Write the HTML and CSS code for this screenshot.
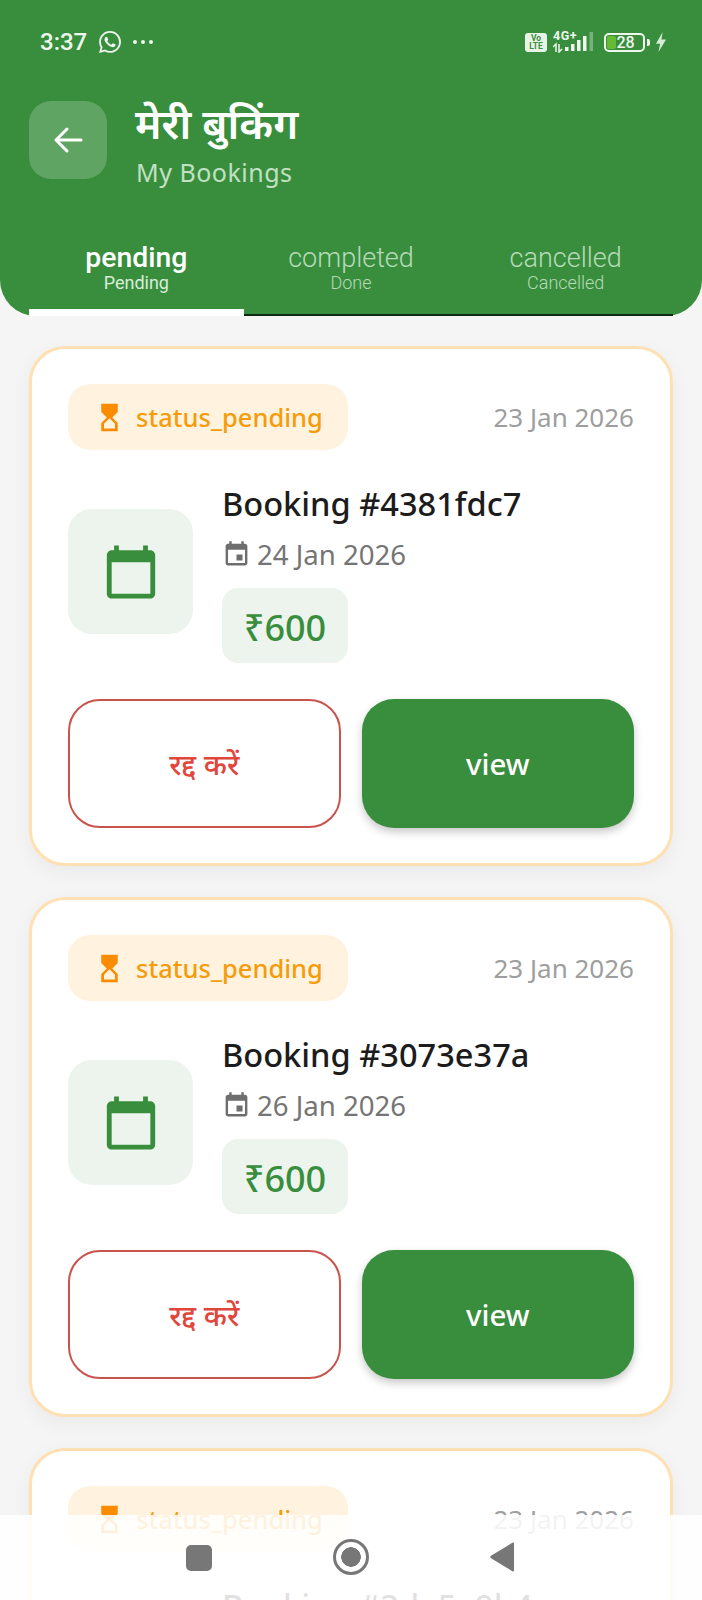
FILE: index.html
```html
<!DOCTYPE html>
<html lang="hi">
<head>
<meta charset="utf-8">
<title>मेरी बुकिंग</title>
<link rel="stylesheet" href="styles.css">
</head>
<body>
<div class="screen">
  <header class="top">
    <div class="statusbar">
      <div class="status-left">
        <span class="clock">3:37</span>
        <svg class="wa" viewBox="0 0 24 24"><path d="M17.472 14.382c-.297-.149-1.758-.867-2.03-.967-.273-.099-.471-.148-.67.15-.197.297-.767.966-.94 1.164-.173.199-.347.223-.644.075-.297-.15-1.255-.463-2.39-1.475-.883-.788-1.48-1.761-1.653-2.059-.173-.297-.018-.458.13-.606.134-.133.298-.347.446-.52.149-.174.198-.298.298-.497.099-.198.05-.371-.025-.52-.075-.149-.669-1.612-.916-2.207-.242-.579-.487-.5-.669-.51-.173-.008-.371-.01-.57-.01-.198 0-.52.074-.792.372-.272.297-1.04 1.016-1.04 2.479 0 1.462 1.065 2.875 1.213 3.074.149.198 2.096 3.2 5.077 4.487.709.306 1.262.489 1.694.625.712.227 1.36.195 1.871.118.571-.085 1.758-.719 2.006-1.413.248-.694.248-1.289.173-1.413-.074-.124-.272-.198-.57-.347m-5.421 7.403h-.004a9.87 9.87 0 01-5.031-1.378l-.361-.214-3.741.982.998-3.648-.235-.374a9.86 9.86 0 01-1.51-5.26c.001-5.45 4.436-9.884 9.888-9.884 2.64 0 5.122 1.03 6.988 2.898a9.825 9.825 0 012.893 6.994c-.003 5.45-4.437 9.884-9.885 9.884m8.413-18.297A11.815 11.815 0 0012.05 0C5.495 0 .16 5.335.157 11.892c0 2.096.547 4.142 1.588 5.945L.057 24l6.305-1.654a11.882 11.882 0 005.683 1.448h.005c6.554 0 11.89-5.335 11.893-11.893a11.821 11.821 0 00-3.48-8.413z"/></svg>
        <svg class="dots" viewBox="0 0 22 6"><circle cx="3" cy="3" r="2"/><circle cx="11" cy="3" r="2"/><circle cx="19" cy="3" r="2"/></svg>
      </div>
      <div class="status-right">
        <span class="volte">Vo<br>LTE</span>
        <span class="network">
          <span class="net-type">4G+</span>
          <svg class="signal" viewBox="0 0 42 22">
            <path class="sig-arrows" d="M0 16l3-3v8M6 13v8l3-3"/>
            <rect x="12" y="16" width="3.500" height="4"/>
            <rect x="18" y="13" width="3.500" height="7"/>
            <rect x="24" y="9" width="3.500" height="11"/>
            <rect x="30" y="5" width="3.500" height="15"/>
            <rect class="sig-off" x="36.500" y="1" width="3.500" height="19"/>
          </svg>
        </span>
        <span class="battery"><span class="battery-fill"></span><span class="battery-num">28</span></span>
        <span class="battery-tip"></span>
        <svg class="bolt" viewBox="0 0 14 24"><path d="M9 0L1 14h5l-2 10 9-15H7.500z"/></svg>
      </div>
    </div>
    <div class="titlebar">
      <button class="back" type="button">
        <svg viewBox="0 0 32 32"><path d="M29 16H4M15 5L4 16l11 11"/></svg>
      </button>
      <div class="titles">
        <h1>मेरी बुकिंग</h1>
        <p>My Bookings</p>
      </div>
    </div>
    <nav class="tabs">
      <div class="tab active"><span class="tab-main">pending</span><span class="tab-sub">Pending</span></div>
      <div class="tab"><span class="tab-main">completed</span><span class="tab-sub">Done</span></div>
      <div class="tab"><span class="tab-main">cancelled</span><span class="tab-sub">Cancelled</span></div>
    </nav>
  </header>

  <main class="list">
    <article class="card">
      <div class="card-head">
        <span class="pill">
          <svg viewBox="0 0 24 24"><path d="M6 2v6h.01L6 8.010 10 12l-4 4 .01.01H6V22h12v-5.990h-.01L18 16l-4-4 4-3.990-.01-.01H18V2H6zm10 14.500V20H8v-3.500l4-4 4 4z"/></svg>
          status_pending
        </span>
        <span class="created">23 Jan 2026</span>
      </div>
      <div class="card-body">
        <div class="icon-box"><svg viewBox="0 0 24 24"><path d="M20 3h-1V1h-2v2H7V1H5v2H4c-1.100 0-2 .9-2 2v16c0 1.100.9 2 2 2h16c1.100 0 2-.9 2-2V5c0-1.100-.9-2-2-2zm0 18H4V8h16v13z"/></svg></div>
        <div class="info">
          <h2>Booking #4381fdc7</h2>
          <div class="when"><svg viewBox="0 0 24 24"><path d="M17 12h-5v5h5v-5zM16 1v2H8V1H6v2H5c-1.110 0-1.990.9-1.990 2L3 19c0 1.100.89 2 2 2h14c1.100 0 2-.9 2-2V5c0-1.100-.9-2-2-2h-1V1h-2zm3 18H5V8h14v11z"/></svg>24 Jan 2026</div>
          <span class="price">₹600</span>
        </div>
      </div>
      <div class="actions">
        <button class="btn cancel" type="button">रद्द करें</button>
        <button class="btn view" type="button">view</button>
      </div>
    </article>

    <article class="card">
      <div class="card-head">
        <span class="pill">
          <svg viewBox="0 0 24 24"><path d="M6 2v6h.01L6 8.010 10 12l-4 4 .01.01H6V22h12v-5.990h-.01L18 16l-4-4 4-3.990-.01-.01H18V2H6zm10 14.500V20H8v-3.500l4-4 4 4z"/></svg>
          status_pending
        </span>
        <span class="created">23 Jan 2026</span>
      </div>
      <div class="card-body">
        <div class="icon-box"><svg viewBox="0 0 24 24"><path d="M20 3h-1V1h-2v2H7V1H5v2H4c-1.100 0-2 .9-2 2v16c0 1.100.9 2 2 2h16c1.100 0 2-.9 2-2V5c0-1.100-.9-2-2-2zm0 18H4V8h16v13z"/></svg></div>
        <div class="info">
          <h2>Booking #3073e37a</h2>
          <div class="when"><svg viewBox="0 0 24 24"><path d="M17 12h-5v5h5v-5zM16 1v2H8V1H6v2H5c-1.110 0-1.990.9-1.990 2L3 19c0 1.100.89 2 2 2h14c1.100 0 2-.9 2-2V5c0-1.100-.9-2-2-2h-1V1h-2zm3 18H5V8h14v11z"/></svg>26 Jan 2026</div>
          <span class="price">₹600</span>
        </div>
      </div>
      <div class="actions">
        <button class="btn cancel" type="button">रद्द करें</button>
        <button class="btn view" type="button">view</button>
      </div>
    </article>

    <article class="card">
      <div class="card-head">
        <span class="pill">
          <svg viewBox="0 0 24 24"><path d="M6 2v6h.01L6 8.010 10 12l-4 4 .01.01H6V22h12v-5.990h-.01L18 16l-4-4 4-3.990-.01-.01H18V2H6zm10 14.500V20H8v-3.500l4-4 4 4z"/></svg>
          status_pending
        </span>
        <span class="created">23 Jan 2026</span>
      </div>
      <div class="card-body">
        <div class="icon-box"><svg viewBox="0 0 24 24"><path d="M20 3h-1V1h-2v2H7V1H5v2H4c-1.100 0-2 .9-2 2v16c0 1.100.9 2 2 2h16c1.100 0 2-.9 2-2V5c0-1.100-.9-2-2-2zm0 18H4V8h16v13z"/></svg></div>
        <div class="info">
          <h2>Booking #3da5e9b4</h2>
        </div>
      </div>
    </article>
  </main>

  <div class="navbar">
    <span class="nav-square"></span>
    <span class="nav-home"></span>
    <svg class="nav-back" viewBox="0 0 25 30"><path d="M24 1.500V28.500a1 1 0 0 1-1.700.7L1 16.200a1.500 1.500 0 0 1 0-2.400L22.300.8A1 1 0 0 1 24 1.500z"/></svg>
  </div>
</div>
</body>
</html>
```
FILE: styles.css
```css
* { box-sizing: border-box; }

html, body {
  margin: 0;
  padding: 0;
}

body {
  background: #f5f5f5;
  font-family: "Noto Sans", "Noto Sans Devanagari", "DejaVu Sans", sans-serif;
}

.screen {
  position: relative;
  width: 702px;
  height: 1600px;
  overflow: hidden;
  background: #f5f5f5;
}

/* Green header with status bar, title and tabs */
.top {
  height: 316px;
  padding: 22px 29px 0;
  background: #388e3c;
  border-radius: 0 0 36px 36px;
  display: flex;
  flex-direction: column;
}

.statusbar {
  height: 40px;
  padding: 0 6px 0 11px;
  display: flex;
  align-items: center;
  justify-content: space-between;
  color: #eef6ee;
  font-family: Roboto, sans-serif;
}

.status-left,
.status-right {
  display: flex;
  align-items: center;
}

.clock {
  font-size: 24px;
  font-weight: 500;
}

.wa {
  width: 22px;
  height: 22px;
  margin-left: 12px;
  fill: #eef6ee;
}

.dots {
  width: 22px;
  height: 6px;
  margin-left: 11px;
  fill: #eef6ee;
}

.volte {
  width: 22px;
  height: 19px;
  background: #e8f3e8;
  border-radius: 3px;
  color: #388e3c;
  font-size: 8.500px;
  line-height: 8.500px;
  font-weight: 700;
  text-align: center;
  padding-top: 1px;
}

.network {
  position: relative;
  width: 42px;
  height: 22px;
  margin-left: 6px;
}

.net-type {
  position: absolute;
  left: 0;
  top: -2px;
  font-size: 12.500px;
  line-height: 13px;
  font-weight: 700;
  letter-spacing: 0.5px;
}

.signal {
  display: block;
  width: 42px;
  height: 22px;
  fill: #eef6ee;
}

.sig-arrows {
  fill: none;
  stroke: #eef6ee;
  stroke-width: 1.500;
}

.sig-off {
  opacity: 0.35;
}

.battery {
  position: relative;
  width: 41px;
  height: 19px;
  margin-left: 9px;
  border: 2px solid #eef6ee;
  border-radius: 5px;
  display: flex;
  align-items: center;
  justify-content: center;
}

.battery-fill {
  position: absolute;
  left: 1px;
  top: 1px;
  bottom: 1px;
  width: 9px;
  background: #66bb33;
  border-radius: 2px;
}

.battery-num {
  position: relative;
  font-size: 16px;
  font-weight: 500;
  padding-left: 2px;
}

.battery-tip {
  width: 3px;
  height: 7px;
  margin-left: 2px;
  background: #eef6ee;
  border-radius: 0 2px 2px 0;
}

.bolt {
  width: 12px;
  height: 20px;
  margin-left: 5px;
  fill: #d8ebd8;
}

.titlebar {
  margin-top: 39px;
  display: flex;
  align-items: flex-start;
  gap: 28px;
}

.back {
  width: 78px;
  height: 78px;
  padding: 0;
  border: 0;
  border-radius: 22px;
  background: rgba(255, 255, 255, 0.2);
  display: flex;
  align-items: center;
  justify-content: center;
}

.back svg {
  width: 32px;
  height: 32px;
  fill: none;
  stroke: #fff;
  stroke-width: 3;
  stroke-linecap: round;
  stroke-linejoin: round;
}

.titles h1 {
  margin: -10px 0 0;
  color: #fff;
  font-size: 42px;
  line-height: 63px;
  font-weight: 600;
}

.titles p {
  margin: 0 0 0 1px;
  color: #c3e0c4;
  font-size: 25px;
  line-height: 36px;
  letter-spacing: 0.5px;
}

.tabs {
  margin-top: auto;
  height: 75px;
  display: flex;
  border-bottom: 2px solid #0f2a12;
}

.tab {
  flex: 1;
  height: 75px;
  display: flex;
  flex-direction: column;
  align-items: center;
  font-family: Roboto, sans-serif;
  color: #b7dab9;
}

.tab.active {
  color: #fff;
  border-bottom: 7px solid #fff;
}

.tab-main {
  font-size: 27px;
  line-height: 34px;
  font-weight: 300;
}

.tab-sub {
  font-size: 18px;
  line-height: 16px;
  font-weight: 300;
}

.tab.active .tab-main {
  font-size: 28.400px;
  font-weight: 500;
}

.tab.active .tab-sub {
  font-weight: 400;
  color: #d9ecd9;
}

/* Booking cards */
.list {
  padding: 30px 29px 0;
  display: flex;
  flex-direction: column;
  gap: 31px;
}

.card {
  flex: none;
  height: 520px;
  padding: 35px 36px;
  background: #fff;
  border: 3px solid #ffe0b2;
  border-radius: 36px;
  box-shadow: 0 6px 20px rgba(0, 0, 0, 0.05);
}

.card-head {
  display: flex;
  align-items: center;
  justify-content: space-between;
}

.pill {
  width: 280px;
  height: 66px;
  padding-left: 25px;
  border-radius: 22px;
  background: #fff3e0;
  color: #f59c0b;
  font-size: 25.500px;
  font-weight: 500;
  display: flex;
  align-items: center;
  gap: 10px;
}

.pill svg {
  width: 33px;
  height: 33px;
  fill: #fb8c00;
}

.created {
  color: #9e9e9e;
  font-size: 26px;
}

.card-body {
  height: 187px;
  margin-top: 28px;
  display: flex;
  align-items: center;
  gap: 29px;
}

.icon-box {
  width: 125px;
  height: 125px;
  border-radius: 24px;
  background: #edf4ee;
  display: flex;
  align-items: center;
  justify-content: center;
}

.icon-box svg {
  width: 58px;
  height: 58px;
  fill: #388e3c;
}

.info {
  align-self: flex-start;
  display: flex;
  flex-direction: column;
  align-items: flex-start;
}

.info h2 {
  margin: 0;
  color: #1c1c1c;
  font-size: 32.600px;
  line-height: 52px;
  font-weight: 500;
}

.when {
  margin-top: 1px;
  height: 46px;
  display: flex;
  align-items: center;
  gap: 6px;
  color: #757575;
  font-size: 27.600px;
}

.when svg {
  width: 29px;
  height: 29px;
  fill: #6e6e6e;
}

.price {
  width: 126px;
  height: 75px;
  margin-top: 11px;
  padding-top: 3px;
  border-radius: 16px;
  background: #edf4ee;
  color: #388e3c;
  font-size: 36px;
  font-weight: 500;
  display: flex;
  align-items: center;
  justify-content: center;
}

.actions {
  margin-top: 34px;
  display: grid;
  grid-template-columns: 1fr 1fr;
  gap: 21px;
}

.btn {
  height: 129px;
  padding: 0;
  border-radius: 32px;
  font-family: inherit;
  font-size: 29.500px;
  font-weight: 500;
}

.cancel {
  background: #fff;
  border: 2px solid #c9534d;
  color: #e0463c;
}

.view {
  background: #388e3c;
  border: 0;
  color: #fff;
  box-shadow: 0 4px 8px rgba(0, 0, 0, 0.22);
}

/* System navigation buttons over the list */
.navbar {
  position: absolute;
  left: 0;
  right: 0;
  bottom: 0;
  height: 85px;
  padding-top: 30px;
  background: rgba(255, 255, 255, 0.87);
  display: flex;
  align-items: flex-start;
}

.nav-square {
  width: 26px;
  height: 26px;
  margin-left: 186px;
  background: #777;
  border-radius: 5px;
}

.nav-home {
  position: relative;
  width: 36px;
  height: 36px;
  margin: -6px 0 0 121px;
  border: 3px solid #777;
  border-radius: 50%;
  background: radial-gradient(circle, #777 0 9.500px, transparent 10px);
}

.nav-back {
  width: 25px;
  height: 30px;
  margin: -3px 0 0 121px;
  fill: #777;
}
```
